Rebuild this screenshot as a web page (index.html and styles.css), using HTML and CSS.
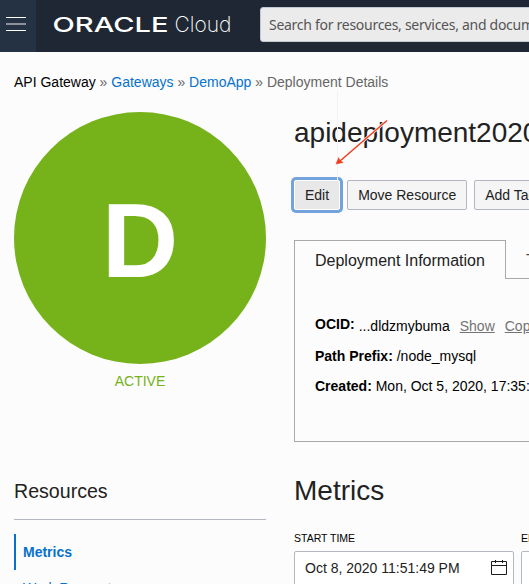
FILE: index.html
```html
<!DOCTYPE html>
<html lang="en">
<head>
<meta charset="utf-8">
<title>Deployment Details</title>
<link rel="stylesheet" href="styles.css">
</head>
<body>
<div class="page">
  <header class="topbar">
    <button class="menu" aria-label="Menu"><span></span><span class="mid"></span><span></span></button>
    <svg class="brand" width="200" height="52" viewBox="0 0 200 52">
      <text class="brand-name" x="16.5" y="32" textLength="116" lengthAdjust="spacingAndGlyphs">ORACLE</text>
      <text class="brand-product" x="138.500" y="32" textLength="57" lengthAdjust="spacingAndGlyphs">Cloud</text>
    </svg>
    <div class="search"><span>Search for resources, services, and documentation</span></div>
  </header>
  <nav class="crumbs"><span class="root">API Gateway</span> » <a>Gateways</a> » <a>DemoApp</a> » Deployment Details</nav>
  <div class="columns">
    <aside class="side">
      <div class="status-circle">D</div>
      <div class="status">ACTIVE</div>
      <h2 class="side-title">Resources</h2>
      <ul class="links">
        <li class="active">Metrics</li>
        <li>Work Requests</li>
      </ul>
    </aside>
    <main class="main">
      <h1 class="title">apideployment20201005</h1>
      <div class="actions">
        <button class="btn focused">Edit</button>
        <button class="btn">Move Resource</button>
        <button class="btn">Add Tags</button>
      </div>
      <div class="tabs">
        <div class="tab current">Deployment Information</div>
        <div class="tab">Tags</div>
      </div>
      <div class="panel">
        <div class="row ocid"><b>OCID:</b><span class="value">...dldzmybuma</span><a>Show</a><a>Copy</a></div>
        <div class="row"><b>Path Prefix:</b> /node_mysql</div>
        <div class="row"><b>Created:</b> Mon, Oct 5, 2020, 17:35:12 UTC</div>
      </div>
      <h2 class="section">Metrics</h2>
      <div class="fields">
        <div class="field">
          <label>START TIME</label>
          <div class="input">Oct 8, 2020 11:51:49 PM
            <svg width="18" height="17" viewBox="0 0 18 17" fill="none" stroke="#1c1c1c"><path d="M1.5 1.5h15v13h-15zM1.5 5.500h15M5.500 0v3M12.500 0v3"/></svg>
          </div>
        </div>
        <div class="field">
          <label>END TIME</label>
          <div class="input">Oct 9, 2020 12:51:49 AM</div>
        </div>
      </div>
    </main>
  </div>
  <svg class="pointer" width="60" height="96" viewBox="0 0 60 96">
    <path class="guide" d="M7.500 0v90"/>
    <path class="halo" d="M57 30.500L10 71"/>
    <path class="shaft" d="M57 30.500L10 71"/>
    <path class="head" d="M6 74L8.700 67.500L9.800 70.600L13.200 72.500Z"/>
  </svg>
</div>
</body>
</html>
```
FILE: styles.css
```css
* { box-sizing: border-box; }
body {
  margin: 0;
  background: #fcfcfc;
  color: #000;
  font: 14px/16px "Liberation Sans", Arial, sans-serif;
}
.page { position: relative; width: 529px; height: 584px; overflow: hidden; }
.topbar { display: flex; height: 52px; background: #1e2733; }
.menu {
  display: flex; flex: none; flex-direction: column; align-items: center;
  justify-content: flex-start;
  gap: 5px; width: 36px; padding: 17px 4px 0 0;
  border: 0; background: #253243;
}
.menu span { flex: none; width: 20px; height: 1px; background: #fff; }
.menu .mid { height: 2px; background: #8c939c; }
.brand { flex: none; margin-right: 24px; fill: #fff; }
.brand-name { font: 500 20.500px Inter, sans-serif; }
.brand-product { font: 200 21.500px Inter, "Liberation Sans", sans-serif; }
.search {
  flex: none; width: 400px; height: 35px; margin-top: 7px; padding: 0 8px;
  border: 1px solid #c3c7d0; border-radius: 3px;
  background: #ebebeb; color: #555;
  font: 14px/34px "Noto Sans", sans-serif;
  letter-spacing: -0.28px;
  white-space: nowrap;
}
.crumbs { padding: 22px 14px 0; color: #666; white-space: nowrap; }
.crumbs .root { color: #000; }
.crumbs a { color: #0572ce; }
.columns { display: flex; gap: 28px; padding: 22px 0 0 14px; }
.side { flex: none; width: 252px; }
.status-circle {
  height: 252px; border-radius: 50%;
  background: #76b21a; color: #fff;
  font-size: 106px; font-weight: bold; line-height: 257px; text-align: center;
}
.status { padding-top: 9px; color: #76b21a; text-align: center; }
.side-title {
  margin: 90px 0 0; height: 41px; border-bottom: 1px solid #b3b7c1;
  color: #222; font-size: 19.600px; font-weight: normal; line-height: 24px;
}
.links { margin: 14px 0 0; padding: 0; list-style: none; color: #0572ce; }
.links li { height: 36px; padding: 10px 7px; border-left: 2px solid transparent; }
.links .active { border-color: #0572ce; font-weight: bold; }
.main { flex: none; width: 440px; }
.title { margin: 5px 0 0; color: #222; font-size: 28px; font-weight: normal; line-height: 32px; }
.actions { display: flex; gap: 7px; margin-top: 31px; }
.btn {
  height: 30px; padding: 0 10px; border: 1px solid #b3b7c1; border-radius: 2px;
  background: #f5f5f5; color: #222; font: inherit;
}
.focused {
  border-color: #fff; background: #e8e8e8;
  box-shadow: 0 0 0 3px #73a3dc; outline: none;
}
.tabs { display: flex; margin-top: 30px; }
.tab {
  height: 39px; padding: 12px 20px 0; border-bottom: 1px solid #a9a9a9;
  color: #444; font-size: 16px; line-height: 18px; flex: 1;
}
.current {
  flex: none; width: 212px; padding-top: 11px; border: 1px solid #a9a9a9; border-bottom: 0; color: #222;
}
.panel { height: 163px; padding: 37px 20px 0; border: solid #a9a9a9; border-width: 0 0 1px 1px; white-space: nowrap; }
.row { margin-bottom: 14px; }
.ocid { display: flex; align-items: baseline; height: 18px; }
.ocid .value { margin-left: 4px; }
.ocid .value, .ocid a { position: relative; top: 2px; }
.ocid a { margin-left: 10px; color: #737373; text-decoration: underline; }
.section { margin: 33px 0 0; color: #222; font-size: 28px; font-weight: normal; line-height: 32px; }
.fields { display: flex; gap: 7px; margin-top: 24px; }
.field { flex: none; width: 220px; }
.field label { display: block; font-size: 10.5px; line-height: 14px; }
.input {
  display: flex; align-items: center; justify-content: space-between;
  height: 36px; margin-top: 6px; padding: 0 5px 2px 10px;
  border: 1px solid #b3b7c1; border-radius: 2px; background: #fff; color: #222;
}
.pointer { position: absolute; left: 330px; top: 90px; fill: none; }
.guide { stroke: #f3f3f3; }
.halo { stroke: #fff; stroke-width: 2.800; }
.shaft { stroke: #f33a1b; stroke-width: 1.500; }
.head { fill: #f33a1b; stroke: #f33a1b; stroke-width: .5; }
```
